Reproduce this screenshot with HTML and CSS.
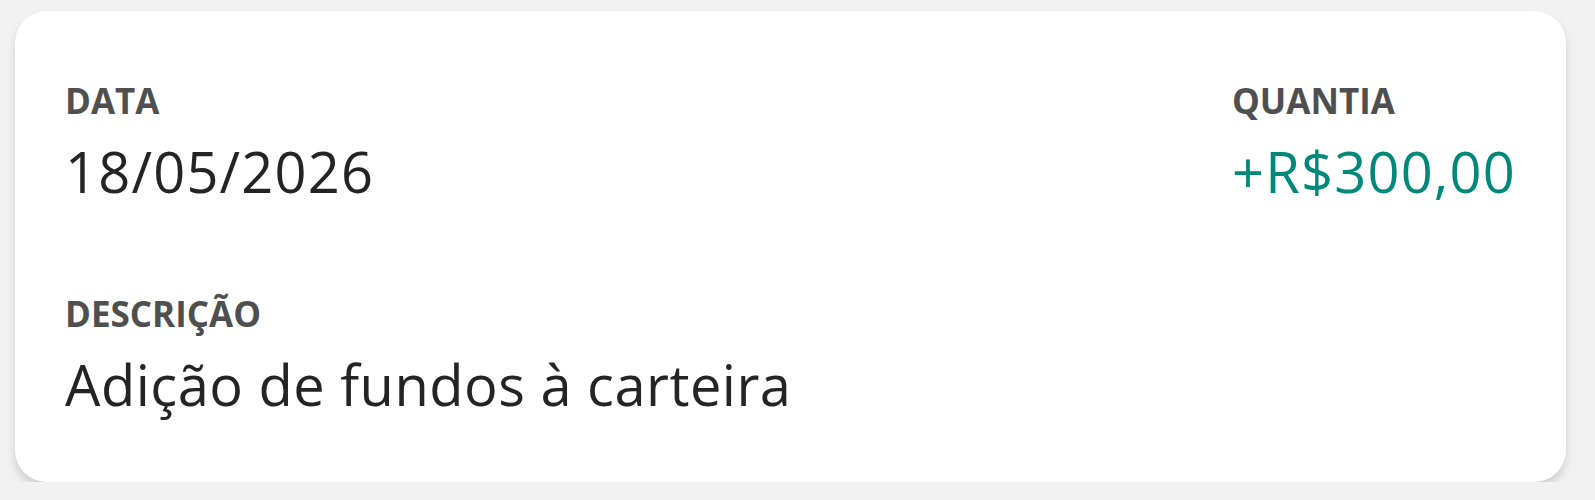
FILE: index.html
```html
<!DOCTYPE html>
<html lang="pt-BR">
<head>
<meta charset="utf-8">
<title>Transação</title>
<link rel="stylesheet" href="styles.css">
</head>
<body>
<section class="card">
  <div class="row">
    <div class="field">
      <div class="label">DATA</div>
      <div class="value num">18/05/2026</div>
    </div>
    <div class="field">
      <div class="label">QUANTIA</div>
      <div class="value num positive">+R$300,00</div>
    </div>
  </div>
  <div class="row row-desc">
    <div class="field">
      <div class="label">DESCRIÇÃO</div>
      <div class="value">Adição de fundos à carteira</div>
    </div>
  </div>
</section>
</body>
</html>
```
FILE: styles.css
```css
html, body {
  margin: 0;
  padding: 0;
}
body {
  background: #f2f2f2;
  padding: 11px 29px 0 15px;
  font-family: "Open Sans", "Noto Sans", sans-serif;
}
.card {
  background: #ffffff;
  border-radius: 32px;
  box-shadow: 0 6px 10px rgba(0, 0, 0, 0.15);
  height: 471px;
  box-sizing: border-box;
  padding: 72px 50px 0 50px;
}
.row {
  display: flex;
  justify-content: space-between;
}
.row-desc {
  margin-top: 97px;
}
.field {
  display: flex;
  flex-direction: column;
  gap: 25px;
}
.label {
  font-size: 35px;
  line-height: 1;
  font-weight: 700;
  color: #4f4f4f;
}
.value {
  font-size: 56px;
  line-height: 1;
  font-weight: 400;
  letter-spacing: 0.5px;
  color: #242424;
}
.value.num {
  letter-spacing: 1.2px;
}
.value.positive {
  color: #00897b;
}
```
